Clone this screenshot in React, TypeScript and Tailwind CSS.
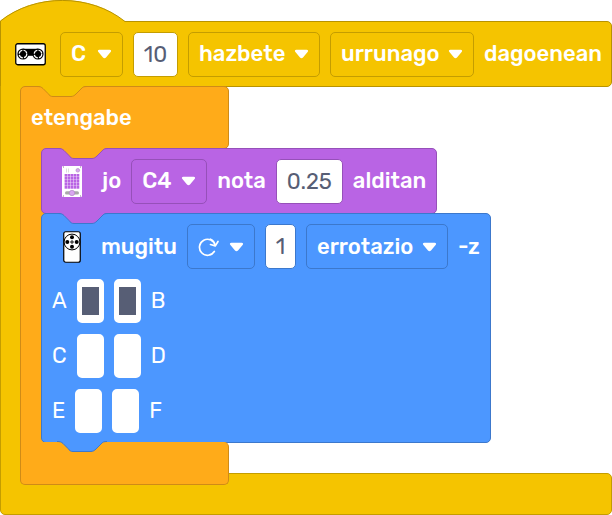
import type { ReactNode } from "react";

const font =
  "font-[Rubik,Roboto,'Liberation_Sans',sans-serif] text-[22px] leading-7 font-medium text-white";

function Caret() {
  return (
    <svg className="pointer-events-none absolute right-2.5 h-2.5 w-[15px]" viewBox="0 0 15 10" fill="#fff" aria-hidden="true">
      <path d="M2.4.8h10.2c1.5 0 2 1.3 1 2.3L9 8.600c-.9.9-2.1.9-3 0L1.400 3.100C.4 2.100.9.8 2.400.8Z" />
    </svg>
  );
}

function Choice({ label, value, className }: { label: string; value: string; className: string }) {
  return (
    <span className={`relative flex h-[45px] shrink-0 items-center rounded-[5px] border ${className}`}>
      <select aria-label={label} className="h-full w-full appearance-none bg-transparent pl-2.5 outline-none">
        <option>{value}</option>
      </select>
      <Caret />
    </span>
  );
}

function TurnChoice() {
  return (
    <span className="relative flex h-[45px] w-[68px] shrink-0 items-center rounded-[5px] border border-[#3c78cc]">
      <select aria-label="Norabidea" className="h-full w-full appearance-none bg-transparent pl-2.5 text-transparent outline-none">
        <option>⟳</option>
      </select>
      <svg
        className="pointer-events-none absolute left-2.5 h-5 w-[22px]"
        viewBox="0 0 22 20"
        fill="none"
        stroke="#fff"
        strokeWidth="1.700"
        strokeLinecap="round"
        strokeLinejoin="round"
        aria-hidden="true"
      >
        <path d="M17.300 8.500A8 8 0 1 0 16.300 14.500M17.300 8.500C16.500 5 14.500 3 12.500 2.200" />
        <path d="M12.500 7.500l4.800 1.400L20 4.500" />
      </svg>
      <Caret />
    </span>
  );
}

function Value({ label, value, className }: { label: string; value: string; className: string }) {
  return (
    <input
      aria-label={label}
      defaultValue={value}
      className={`h-[45px] shrink-0 rounded-[5px] border bg-white p-0 text-center font-normal text-[#575e75] outline-none ${className}`}
    />
  );
}

function Tab({ fill, stroke, className }: { fill: string; stroke: string; className: string }) {
  return (
    <svg className={`absolute h-[11px] w-[50px] ${className}`} viewBox="0 0 50 11" aria-hidden="true">
      <path d="M0 0C3 0 4.500 1 6 2.500L11 7.500C12.500 9.500 13.500 10.500 16 10.500H34C36 10.500 37.500 9.500 39 8L44 3C45.500 1 47 0 50 0Z" fill={fill} />
      <path d="M0 .5C3 .5 4.500 1 6 2.500L11 7.500C12.500 9.500 13.500 10.500 16 10.500H34C36 10.500 37.500 9.500 39 8L44 3C45.500 1 47 .5 50 .5" fill="none" stroke={stroke} />
    </svg>
  );
}

function Switches({ left, right, on = false }: { left: string; right: string; on?: boolean }) {
  const box =
    "h-11 w-[27px] appearance-none rounded-[5px] border-x-[5px] border-y-8 border-white bg-white checked:bg-[#575e75]";
  return (
    <div className="flex h-[45px] items-center gap-2.5 font-normal">
      <label className="flex items-center gap-2.5">
        {left}
        <input type="checkbox" defaultChecked={on} className={box} />
      </label>
      <label className="flex items-center gap-2.5">
        <input type="checkbox" defaultChecked={on} className={box} />
        {right}
      </label>
    </div>
  );
}

function SensorIcon() {
  return (
    <svg className="mr-1 h-[23px] w-[31px] shrink-0" viewBox="0 0 31 23" aria-hidden="true">
      <rect x=".75" y=".75" width="29.500" height="21" rx="2" fill="#fff" stroke="#000" strokeWidth="1.300" />
      <path d="M8 5.800h15v7H8z" />
      <circle cx="8" cy="11" r="5.600" />
      <circle cx="23" cy="11" r="5.600" />
      <circle cx="8" cy="11" r="3.800" fill="none" stroke="#fff" strokeWidth="1.200" strokeDasharray="4.800 1.200" />
      <circle cx="23" cy="11" r="3.800" fill="none" stroke="#fff" strokeWidth="1.200" strokeDasharray="4.800 1.200" />
    </svg>
  );
}

function HubIcon() {
  const cells = [0, 1, 2, 3, 4];
  return (
    <svg className="mr-2.5 h-[31px] w-5 shrink-0" viewBox="0 0 20 31" aria-hidden="true">
      <rect width="20" height="31" rx="1" fill="#fff" />
      {cells.map((r) => cells.map((c) => (
        <rect key={`${r}-${c}`} x={2.6 + c * 3} y={8 + r * 3} width="2.700" height="2.700" fill="#b964e4" />
      )))}
      <circle cx="15.800" cy="4.300" r="1.800" fill="#d9a6f0" stroke="#b58bc8" strokeWidth=".7" />
      <path d="M4.500 2.500v4M6.500 2.500v4" stroke="#ddd" strokeWidth="1" />
      <path d="M1 1h1M18 1h1M1 30h1M18 30h1" stroke="#8d6f9c" />
      <rect x="3" y="25.300" width="14" height="3.200" rx="1.600" fill="#aaa" />
      <circle cx="10" cy="27" r="2.700" fill="#d9a6f0" stroke="#b58bc8" strokeWidth=".7" />
    </svg>
  );
}

function MotorIcon() {
  return (
    <svg className="mr-2.5 h-8 w-[18px] shrink-0" viewBox="0 0 18 32" aria-hidden="true">
      <rect x=".75" y=".75" width="16.500" height="30.500" rx="2" fill="#fff" stroke="#000" strokeWidth="1.200" />
      <circle cx="9" cy="11" r="7.900" fill="#fff" stroke="#000" />
      <circle cx="9" cy="6.300" r="2" />
      <circle cx="9" cy="15.700" r="2" />
      <circle cx="4.300" cy="11" r="2" />
      <circle cx="13.700" cy="11" r="2" />
      <path d="M7 11h4M9 9v4" stroke="#000" strokeWidth=".9" />
    </svg>
  );
}

function Line({ children }: { children: ReactNode }) {
  return <div className="flex items-center gap-2.5 whitespace-nowrap">{children}</div>;
}

export default function App() {
  return (
    <main className={`min-w-fit bg-white ${font}`}>
      <svg className="relative z-10 block h-[23px] w-[126px]" viewBox="0 0 126 23" aria-hidden="true">
        <path d="M0 23V21C35-7 90-7 125 21.500V23Z" fill="#f5c400" />
        <path d="M.5 23V21C35-6.500 90-6.500 125 21.500" fill="none" stroke="#b89300" />
      </svg>
      <header className="-mt-0.5 flex h-[66px] w-full items-center rounded-r-[5px] border border-[#b89300] bg-[#f5c400] pl-3.5">
        <Line>
          <SensorIcon />
          <Choice label="Ataka" value="C" className="w-[63px] border-[#c49d00]" />
          <Value label="Distantzia" value="10" className="w-[45px] border-[#c49d00]" />
          <Choice label="Unitatea" value="hazbete" className="w-[132px] border-[#c49d00]" />
          <Choice label="Konparazioa" value="urrunago" className="w-[144px] border-[#c49d00]" />
          <span>dagoenean</span>
        </Line>
      </header>
      <div className="relative z-10 -mt-px flex">
        <div className="w-[26px] shrink-0 border-l border-[#c49d00] bg-[#f5c400]" />
        <section className="relative -ml-1.5">
          <div className="relative flex h-[63px] w-[209px] items-center rounded-[5px] rounded-bl-none border border-[#cf8b17] bg-[#ffab19] pl-2.5">
            <Tab fill="#f5c400" stroke="#cf8b17" className="-top-px left-4" />
            <span>etengabe</span>
          </div>
          <div className="relative z-20 -my-px flex">
            <div className="w-[26px] shrink-0 border-l border-[#cf8b17] bg-[#ffab19]" />
            <div className="relative -ml-[5px] flex flex-col items-start">
              <div className="relative flex h-[66px] items-center rounded-[5px] border border-[#9650b9] bg-[#b964e4] pl-5 pr-2.5">
                <Tab fill="#ffab19" stroke="#9650b9" className="-top-px left-4" />
                <Line>
                  <HubIcon />
                  <span>jo</span>
                  <Choice label="Nota" value="C4" className="w-[76px] border-[#9650b9]" />
                  <span>nota</span>
                  <Value label="Iraupena" value="0.25" className="w-[67px] border-[#9650b9]" />
                  <span>alditan</span>
                </Line>
              </div>
              <div className="relative -mt-px h-[230px] rounded-[5px] border border-[#3c78cc] bg-[#4c97ff] pr-2.5 pt-2.5">
                <Tab fill="#b964e4" stroke="#3c78cc" className="-top-px left-4" />
                <div className="pl-[21px]">
                  <Line>
                    <MotorIcon />
                    <span>mugitu</span>
                    <TurnChoice />
                    <Value label="Kopurua" value="1" className="w-[31px] border-[#3c78cc]" />
                    <Choice label="Neurria" value="errotazio" className="w-[142px] border-[#3c78cc]" />
                    <span>-z</span>
                  </Line>
                </div>
                <div className="flex flex-col gap-2.5 pl-2.5 pt-[9px]">
                  <Switches left="A" right="B" on />
                  <Switches left="C" right="D" />
                  <Switches left="E" right="F" />
                </div>
              </div>
            </div>
          </div>
          <div className="relative z-20 h-[43px] w-[209px]">
            <div className="h-full rounded-[5px] rounded-tl-none border border-t-0 border-[#cf8b17] bg-[#ffab19]" />
            <Tab fill="#4c97ff" stroke="#3c78cc" className="-top-px left-[37px]" />
          </div>
        </section>
      </div>
      <footer className="-mt-3 h-[42px] w-full rounded-[5px] rounded-tl-none border border-[#c49d00] bg-[#f5c400]" />
    </main>
  );
}
